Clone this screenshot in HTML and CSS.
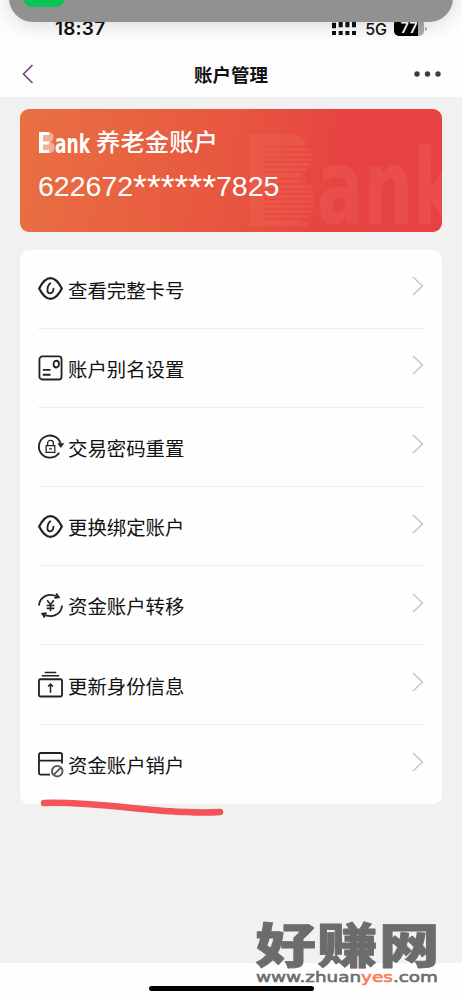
FILE: index.html
```html
<!DOCTYPE html>
<html lang="zh-CN">
<head>
<meta charset="utf-8">
<meta name="viewport" content="width=device-width, initial-scale=1">
<title>账户管理</title>
<link rel="stylesheet" href="styles.css">
</head>
<body>
<div class="screen">
  <div class="banner"><span class="banner-app"></span></div>
  <header class="status">
    <span class="time">18:37</span>
    <div class="status-right">
      <svg class="signal" width="24" height="14" viewBox="0 0 24 14"><path d="M0 3.500h4M6.700 2.500h4M13.400 2.500h4M20 2.500h4" stroke="#111" stroke-width="5.500"/><path d="M0 11h4M6.700 11h4M13.400 11h4M20 11h4" stroke="#111" stroke-width="4"/></svg>
      <span class="network">5G</span>
      <div class="battery"><span>77</span></div><i class="battery-tip"></i>
    </div>
  </header>
  <nav class="nav">
    <svg width="12" height="20" viewBox="0 0 12 20" fill="none" stroke="#70488c" stroke-width="1.700"><path d="M10.500 1L1.500 10l9 9"/></svg>
    <h1>账户管理</h1>
    <svg width="28" height="6" viewBox="0 0 28 6" fill="#3c3c3c"><circle cx="3" cy="3" r="2.700"/><circle cx="13.500" cy="3" r="2.700"/><circle cx="24" cy="3" r="2.700"/></svg>
  </nav>
  <main class="content">
    <section class="bank-card">
      <svg class="card-mark" width="199" height="123" viewBox="0 0 199 123">
        <g fill="#ff9b85" fill-opacity=".13">
          <path d="M7 25h45l14 8H21v81h46l-5 3H7z"/>
          <path d="M21 33h40v4H21zM21 39h46v3H21zM21 44h48v3H21zM21 49h48v3H21zM21 54h46v3H21zM21 59h42v3H21zM21 64h38v5H21zM21 71h42v3H21zM21 76h47v3H21zM21 81h49v3H21zM21 86h50v3H21zM21 91h50v3H21zM21 96h50v3H21zM21 101h49v3H21zM21 106h45v3H21zM21 111h38v3H21z"/>
          <text class="mark-text" x="74" y="115" textLength="142" lengthAdjust="spacingAndGlyphs">ank</text>
        </g>
      </svg>
      <div class="card-title">
        <svg width="53" height="24" viewBox="0 0 53 24">
          <path d="M1 1h10q5 1 4.500 5q0 4-3 5q4 1 4 6q0 5-5 5H1z" fill="#fff" opacity=".45"/>
          <path d="M1 1h10v3H5v6.500h6v3H5V19h6v3H1z" fill="#fff"/>
          <text class="logo-text" x="17" y="22" textLength="35" lengthAdjust="spacingAndGlyphs">ank</text>
        </svg>
        <span>养老金账户</span>
      </div>
      <div class="card-number">622672<span class="mask">******</span>7825</div>
    </section>
    <ul class="menu">
      <li><svg class="icon" viewBox="0 0 26 26"><path d="M1.200 13C5 5.500 9 2.200 13 2.200S21 5.500 24.800 13C21 20.500 17 23.800 13 23.800S5 20.500 1.200 13z" stroke-width="2.300" stroke-linejoin="round"/><path d="M13.500 7.500C9.500 9 8.500 17.500 12 18c3 .3 4.500-2.500 4-5.500"/></svg><span>查看完整卡号</span><svg class="arrow" viewBox="0 0 12 20"><path d="M1 1l9.500 9L1 19"/></svg></li>
      <li><svg class="icon" viewBox="0 0 26 26"><rect x="1.500" y="1.500" width="23" height="24" rx="3"/><ellipse cx="19" cy="9.500" rx="2.800" ry="3.500"/><path d="M5 15.500h8M5 20.500h8"/></svg><span>账户别名设置</span><svg class="arrow" viewBox="0 0 12 20"><path d="M1 1l9.500 9L1 19"/></svg></li>
      <li><svg class="icon" viewBox="0 0 26 26"><path d="M23.500 10A11.500 11.500 0 1 0 22 19.500"/><path d="M22 10.500h3.500l-1.800 2.500z" fill="#222"/><path d="M8.500 12h9v7h-9zM10 12V9.500c0-3.700 6-3.700 6 0V12M11.500 15.500h3" stroke-width="1.300"/></svg><span>交易密码重置</span><svg class="arrow" viewBox="0 0 12 20"><path d="M1 1l9.500 9L1 19"/></svg></li>
      <li><svg class="icon" viewBox="0 0 26 26"><path d="M1.200 13C5 5.500 9 2.200 13 2.200S21 5.500 24.800 13C21 20.500 17 23.800 13 23.800S5 20.500 1.200 13z" stroke-width="2.300" stroke-linejoin="round"/><path d="M13.500 7.500C9.500 9 8.500 17.500 12 18c3 .3 4.500-2.500 4-5.500"/></svg><span>更换绑定账户</span><svg class="arrow" viewBox="0 0 12 20"><path d="M1 1l9.500 9L1 19"/></svg></li>
      <li><svg class="icon" viewBox="0 0 26 26"><path d="M1 13C2 3 12-1 21.500 4.500M25 13c-1 10-11 14-20.500 8.500"/><path d="M19 .5l2.500 4-4.500.5M7 25.500l-2.500-4 4.500-.5"/><path d="M9.500 7.500l3.500 4.500 3.500-4.500M13 12v7M9 13h8M9 16h8" stroke-width="1.600"/></svg><span>资金账户转移</span><svg class="arrow" viewBox="0 0 12 20"><path d="M1 1l9.500 9L1 19"/></svg></li>
      <li><svg class="icon" viewBox="0 0 26 26"><rect x="1" y="7.500" width="24" height="18" rx="1.500"/><path d="M7 .5h12M4 4h18" stroke-width="1.600"/><path d="M13 21.500v-9M10.500 15l2.500-2.500 2.500 2.500" stroke-width="1.600"/></svg><span>更新身份信息</span><svg class="arrow" viewBox="0 0 12 20"><path d="M1 1l9.500 9L1 19"/></svg></li>
      <li><svg class="icon" viewBox="0 0 26 26"><path d="M12.500 23.500H3q-2 0-2-2V3q0-2 2-2h20q2 0 2 2v9M1 9h24"/><circle cx="20" cy="20" r="5.500" stroke="#555"/><path d="M16.500 23.500l7-7" stroke="#555"/></svg><span>资金账户销户</span><svg class="arrow" viewBox="0 0 12 20"><path d="M1 1l9.500 9L1 19"/></svg></li>
    </ul>
  </main>
  <footer class="home"><i></i></footer>
  <svg class="underline" width="190" height="24" viewBox="0 0 190 24"><path d="M8 8C57 6 112 17 151 17Q168 18 184 17" fill="none" stroke="#f4535a" stroke-width="6.500" stroke-linecap="round"/></svg>
  <svg class="site-mark" width="190" height="76" viewBox="0 0 190 76">
    <text class="site-name" transform="translate(3.500 50.500) scale(1.260 1)" x="0" y="0" textLength="146" lengthAdjust="spacing">好赚网</text>
    <text class="site-url" x="4" y="69.500" textLength="182" lengthAdjust="spacingAndGlyphs">www.zhuan<tspan class="site-accent">yes</tspan>.com</text>
  </svg>
</div>
</body>
</html>
```

FILE: styles.css
```css
* { box-sizing: border-box; }
body { margin: 0; font-family: "Liberation Sans", "Noto Sans CJK SC", sans-serif; color: #111; }
.screen { position: relative; width: 462px; height: 1000px; overflow: hidden; background: #fefefe; display: flex; flex-direction: column; }
.banner { position: absolute; z-index: 2; top: -40px; left: 9px; width: 444px; height: 62px; border-radius: 24px; background: #919191; box-shadow: 0 2px 22px rgba(0, 0, 0, .16); }
.banner-app { position: absolute; left: 15px; top: 20px; width: 40px; height: 27px; border-radius: 8px; background: #08c557; }
.status { height: 50px; flex: none; display: flex; justify-content: space-between; align-items: flex-start; padding: 17.500px 35px 0 55px; }
.time { font: 600 19px/22px Inter, sans-serif; letter-spacing: .2px; }
.status-right { display: flex; align-items: center; height: 22px; }
.network { font: 500 16px/20px Inter, sans-serif; margin: 0 7px 0 9px; }
.battery { width: 30px; height: 17px; margin-top: -3px; border-radius: 5px; background: linear-gradient(90deg, #000 79%, #aaa 79%); color: #fff; font: 600 14.500px/18px Inter, sans-serif; text-align: center; }
.battery-tip { width: 2px; height: 4px; margin-left: 1px; border-radius: 0 2px 2px 0; background: #aaa; }
.nav { height: 47px; flex: none; display: flex; align-items: center; justify-content: space-between; padding: 0 20px 0 22px; }
.nav h1 { margin: 4px -14px 0 0; font-size: 18.500px; line-height: 26px; font-weight: 600; }
.content { height: 866px; flex: none; padding: 12px 20px 0; background: #f1f1f1; }
.bank-card { position: relative; height: 123px; border-radius: 9px; overflow: hidden; padding: 20px 18px 0; background: linear-gradient(100deg, #e97042, #e8573f 48%, #e64342 75%, #e84144); color: #fff; }
.card-mark { position: absolute; left: 223px; top: 0; }
.mark-text { font: 700 106px "DejaVu Sans", sans-serif; }
.logo-text { font: 700 26px "DejaVu Sans", sans-serif; fill: #fff; }
.card-title { position: relative; display: flex; align-items: center; gap: 5px; height: 28px; font-size: 24.400px; line-height: 28px; font-weight: 500; }
.card-number { position: relative; margin-top: 13px; font-size: 28.500px; line-height: 32px; white-space: nowrap; }
.mask { font-size: 35.500px; line-height: 0; vertical-align: -3px; }
.menu { margin: 17.500px 0 0; padding: 0 18px; list-style: none; background: #fefefe; border-radius: 9px; }
.menu li { height: 79.200px; display: flex; align-items: center; border-bottom: 1.500px solid #ededed; font-size: 19.400px; line-height: 28px; }
.menu li:last-child { border: 0; }
.menu li span { margin: 4px 0 0 -1px; }
.icon { width: 25px; height: 25px; margin-right: 6px; fill: none; stroke: #222; stroke-width: 1.900; overflow: visible; }
.arrow { width: 12px; height: 20px; margin: -5px 0 0 auto; fill: none; stroke: #c6c6c6; stroke-width: 1.500; }
.home { flex: 1; display: flex; justify-content: center; padding-top: 23px; }
.home i { width: 165px; height: 5px; border-radius: 3px; background: #000; }
.underline { position: absolute; left: 36px; top: 795px; }
.site-mark { position: absolute; left: 252px; top: 912px; }
.site-name { font: 900 48px "Noto Sans CJK SC", sans-serif; fill: #6c6c6c; stroke: #6c6c6c; stroke-width: .8; stroke-linejoin: round; }
.site-url { font: 400 14.500px "DejaVu Sans", sans-serif; fill: #6c6c6c; stroke: #6c6c6c; stroke-width: .6; }
.site-accent { fill: #fb7c58; stroke: #fb7c58; }
```
